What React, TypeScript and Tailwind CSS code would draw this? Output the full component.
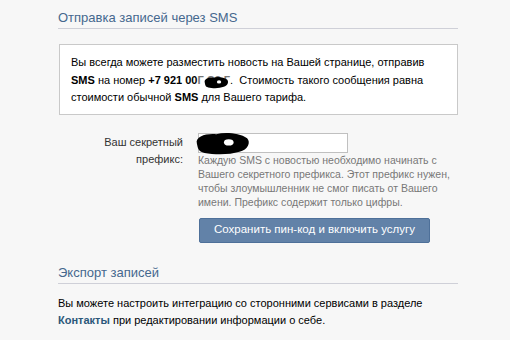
const font = "font-['Liberation_Sans',Arial,sans-serif]";

const Blob = ({ className }: { className: string }) => (
  <svg className={className} viewBox="0 0 60 24" preserveAspectRatio="none">
    <path
      d="M4 12 C2 5 14 2 24 3 C34 1 48 2 56 7 C60 11 57 18 48 20 C38 23 22 23 12 21 C5 20 5 16 4 12 Z"
      fill="#000"
    />
    <ellipse cx="37" cy="11" rx="5" ry="3" fill="#fff" />
  </svg>
);

export default function App() {
  return (
    <div className={`h-[340px] w-[510px] overflow-hidden bg-[#f7f7f7] pl-[58px] text-[11px] text-black ${font}`}>
      <div className="w-[400px]">
        {/* sms section */}
        <div className="border-b border-[#cfd0d8] pb-[2px] pt-[10px] text-[13px] leading-[16px] text-[#45688e]">
          Отправка записей через SMS
        </div>

        <div className="ml-px mt-[15px] border border-[#c9c9c9] bg-white pb-[7px] pl-[11px] pt-[9px] leading-[17.5px]">
          Вы всегда можете разместить новость на Вашей странице, отправив
          <br />
          <b>SMS</b> на номер <b>+7 921 00</b>
          <span className="relative inline-block">
            <b className="text-[#777]">Г С2 Г</b>
            <Blob className="absolute left-[6px] top-[4px] h-[13px] w-[26px]" />
          </span>
          .&nbsp; Стоимость такого сообщения равна
          <br />
          стоимости обычной <b>SMS</b> для Вашего тарифа.
        </div>

        <div className="mt-[18px] flex gap-[15px]">
          <div className="w-[125px] pt-[1.5px] text-right leading-[17px] text-[#333]">
            Ваш секретный
            <br />
            префикс:
          </div>
          <div className="flex flex-col">
            <div className="relative h-[20px] w-[150px] border border-[#c0c0c0] bg-white">
              <Blob className="absolute -left-[6px] -top-[3px] h-[25px] w-[58px]" />
            </div>
            <div className="whitespace-nowrap text-[10.5px] leading-[14px] text-[#777]">
              Каждую SMS с новостью необходимо начинать с
              <br />
              Вашего секретного префикса. Этот префикс нужен,
              <br />
              чтобы злоумышленник не смог писать от Вашего
              <br />
              имени. Префикс содержит только цифры.
            </div>
            <button className="ml-px mt-[9px] h-[25px] w-[231px] rounded-[2px] border border-[#4e7099] bg-[#6282a8] text-[11.5px] text-white">
              Сохранить пин-код и включить услугу
            </button>
          </div>
        </div>

        {/* export section */}
        <div className="mt-[22px] border-b border-[#cfd0d8] pb-[2px] text-[13px] leading-[16px] text-[#45688e]">
          Экспорт записей
        </div>
        <div className="mt-[11px] leading-[17px]">
          Вы можете настроить интеграцию со сторонними сервисами в разделе
          <br />
          <b className="text-[#2b587a]">Контакты</b> при редактировании информации о себе.
        </div>
      </div>
    </div>
  );
}
